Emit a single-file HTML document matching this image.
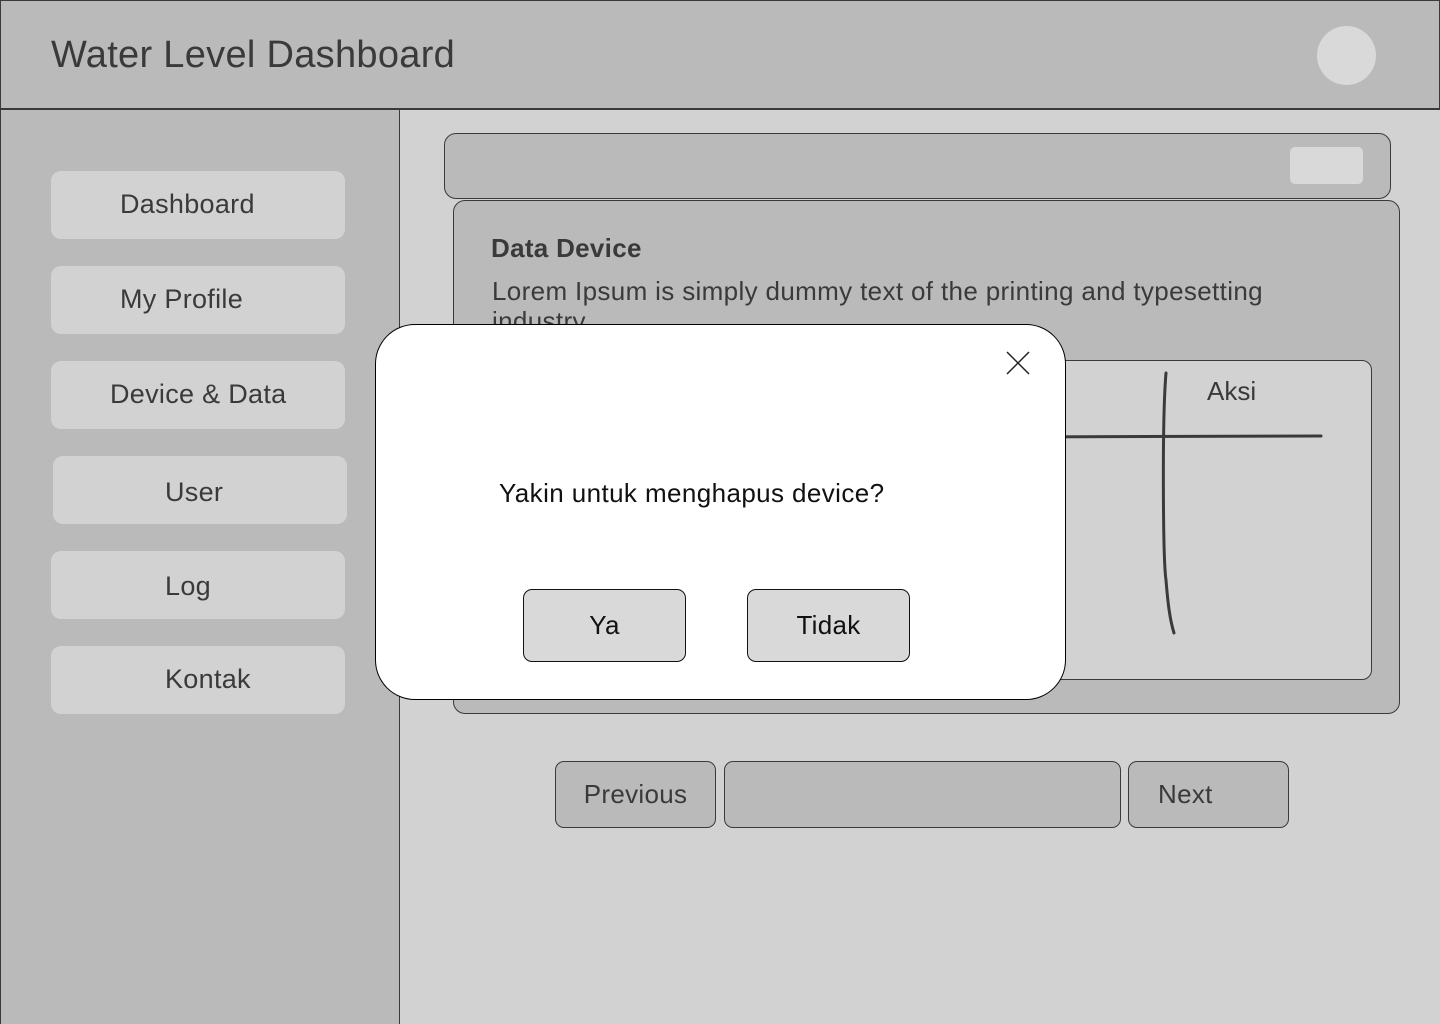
<!DOCTYPE html>
<html><head><meta charset="utf-8"><style>
*{box-sizing:border-box;margin:0;padding:0}
body{width:1440px;height:1024px;position:relative;overflow:hidden;background:#d2d2d2;font-family:"Liberation Sans",sans-serif;color:#3a3a3a}
.a{position:absolute}
.hdr{left:0;top:0;width:1440px;height:110px;background:#bababa;border:1px solid #3a3a3a;border-bottom:2px solid #3a3a3a}
.side{left:0;top:110px;width:400px;height:914px;background:#bababa;border-left:1px solid #3a3a3a;border-right:1px solid #3a3a3a}
.nav{position:absolute;width:294px;height:68px;background:#d2d2d2;border-radius:10px;font-size:27px;line-height:66px;letter-spacing:0.3px}
.btn{position:absolute;border:1px solid #3a3a3a;border-radius:9px;background:#bababa;font-size:26px;line-height:64px;letter-spacing:0.3px}
</style></head><body>
<div class="a hdr"></div>
<div class="a" style="left:51px;top:34px;font-size:38px;letter-spacing:0.3px">Water Level Dashboard</div>
<div class="a" style="left:1317px;top:26px;width:59px;height:59px;border-radius:50%;background:#d9d9d9"></div>
<div class="a side"></div>
<div class="nav" style="left:51px;top:171px"><span style="position:absolute;left:69px">Dashboard</span></div>
<div class="nav" style="left:51px;top:266px"><span style="position:absolute;left:69px">My Profile</span></div>
<div class="nav" style="left:51px;top:361px"><span style="position:absolute;left:59px">Device &amp; Data</span></div>
<div class="nav" style="left:53px;top:456px;height:68px"><span style="position:absolute;left:112px;top:3px">User</span></div>
<div class="nav" style="left:51px;top:551px"><span style="position:absolute;left:114px;top:2px">Log</span></div>
<div class="nav" style="left:51px;top:646px"><span style="position:absolute;left:114px">Kontak</span></div>

<div class="a" style="left:444px;top:133px;width:947px;height:66px;background:#bababa;border:1px solid #3a3a3a;border-radius:12px"></div>
<div class="a" style="left:1290px;top:147px;width:73px;height:37px;background:#d9d9d9;border-radius:5px"></div>
<div class="a" style="left:453px;top:200px;width:947px;height:514px;background:#bababa;border:1px solid #3a3a3a;border-radius:12px;overflow:hidden">
 <div class="a" style="left:37px;top:32px;font-size:26px;font-weight:bold;letter-spacing:0.3px">Data Device</div>
 <div class="a" style="left:38px;top:75px;font-size:26px;width:830px;line-height:30px;letter-spacing:0.35px">Lorem Ipsum is simply dummy text of the printing and typesetting industry</div>
</div>
<div class="a" style="left:470px;top:360px;width:902px;height:320px;background:#d2d2d2;border:1px solid #3a3a3a;border-radius:10px"></div>
<div class="a" style="left:1207px;top:376px;font-size:26px">Aksi</div>
<svg class="a" style="left:0;top:0" width="1440" height="1024"><g fill="none" stroke="#3a3a3a" stroke-width="3" stroke-linecap="round"><path d="M1000 437 L1321 436"/><path d="M1166 373 C1162 420 1163 560 1166 580 C1168 605 1170 620 1174 633"/></g></svg>

<div class="a" style="left:375px;top:324px;width:691px;height:376px;background:#fff;border:1px solid #000;border-radius:40px"></div>
<svg class="a" style="left:1005px;top:350px" width="26" height="26"><path d="M2 2L24 24M24 2L2 24" stroke="#222" stroke-width="1.5"/></svg>
<div class="a" style="left:499px;top:478px;font-size:26px;color:#111;letter-spacing:0.4px">Yakin untuk menghapus device?</div>
<div class="btn" style="left:523px;top:589px;width:163px;height:73px;background:#d9d9d9;border-color:#111;color:#111;line-height:70px;text-align:center">Ya</div>
<div class="btn" style="left:747px;top:589px;width:163px;height:73px;background:#d9d9d9;border-color:#111;color:#111;line-height:70px;text-align:center">Tidak</div>

<div class="btn" style="left:555px;top:761px;width:161px;height:67px;text-align:center">Previous</div>
<div class="btn" style="left:724px;top:761px;width:397px;height:67px"></div>
<div class="btn" style="left:1128px;top:761px;width:161px;height:67px"><span style="position:absolute;left:29px">Next</span></div>
</body></html>
